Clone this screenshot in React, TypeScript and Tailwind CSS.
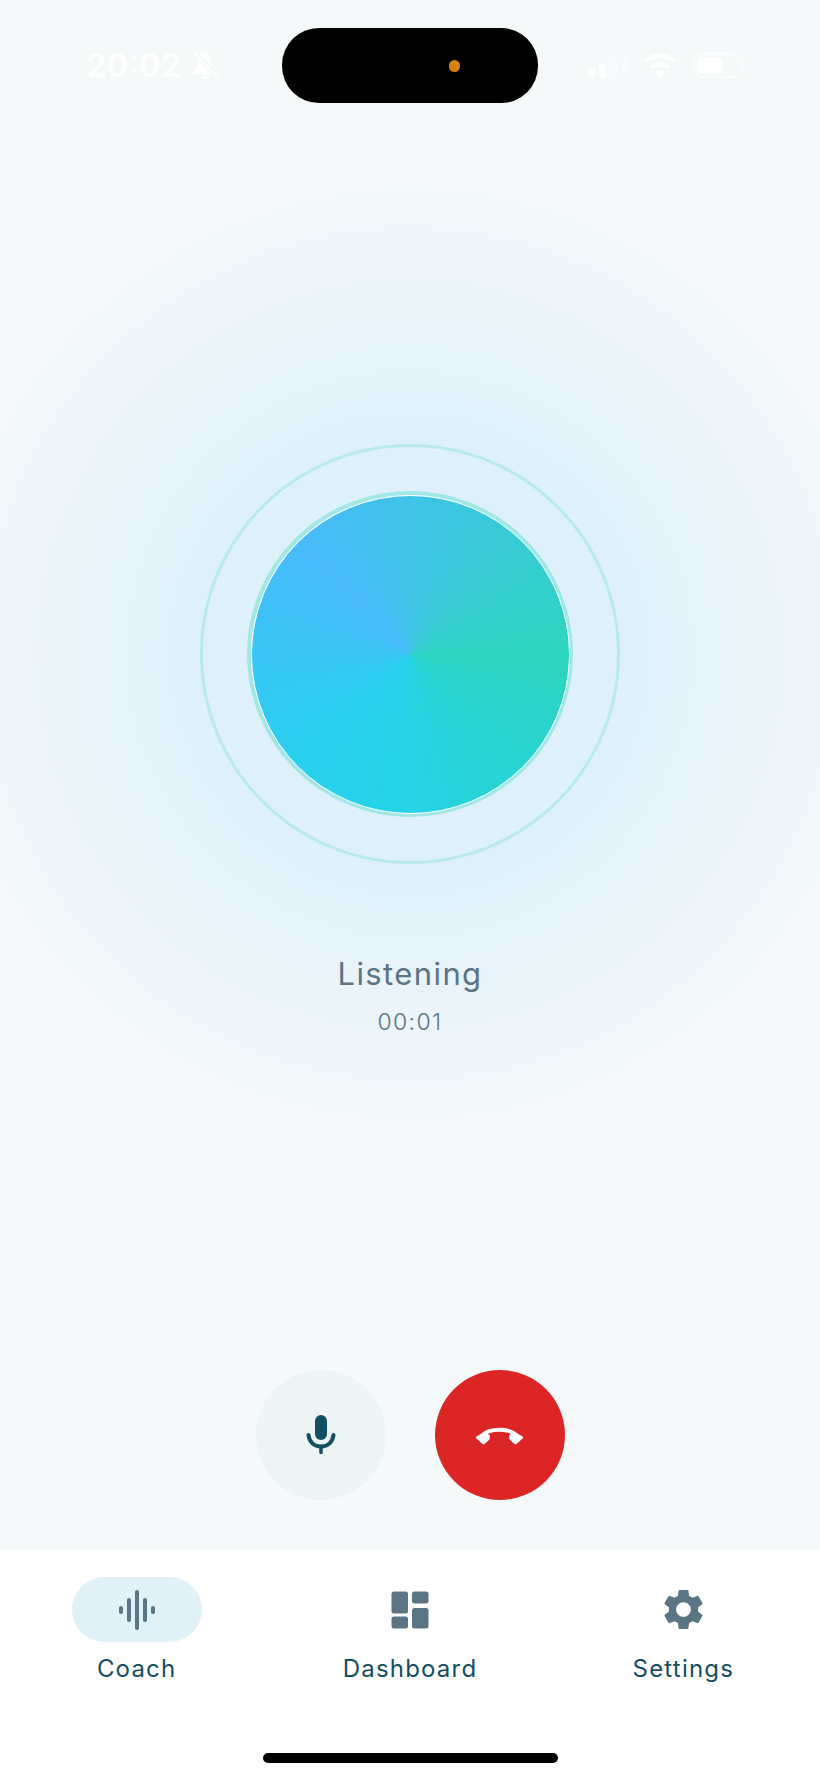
const slate = "#5b7585";
const ink = "#134e63";

function StatusLeft() {
  return (
    <div className="flex items-center gap-[10px] text-white">
      <span className="text-[33px] leading-none font-semibold">20:02</span>
      <svg width="28" height="29" viewBox="0 0 28 29" fill="none">
        <path
          d="M14 1c2.500 0 4.200 1.600 5 3.800 1.200 3.300.6 7.500 2.400 10.600L9 4.500C10 2.400 11.800 1 14 1zM6.800 9.500l13.400 14.300H3c-1.300 0-2-1.200-1.200-2.200 2.800-3.300 4.400-6.700 5-12.100zM10.500 25.200h7c-.4 1.900-1.800 3.300-3.500 3.300s-3.100-1.400-3.500-3.300z"
          fill="white"
        />
        <path d="M3 1.500 27 27" stroke="white" strokeWidth="2" strokeLinecap="round" />
      </svg>
    </div>
  );
}

function StatusRight() {
  return (
    <div className="flex items-center">
      <svg width="40" height="25" viewBox="0 0 40 25" fill="white">
        <rect x="0" y="15" width="7" height="10" rx="2.500" />
        <rect x="11" y="11" width="7" height="14" rx="2.500" />
        <rect x="22" y="5" width="7" height="20" rx="2.500" opacity="0.35" />
        <rect x="33" y="0" width="7" height="25" rx="2.500" opacity="0.35" />
      </svg>
      <svg className="ml-[15px]" width="34" height="25" viewBox="0 0 34 25" fill="none" stroke="white" strokeWidth="4.500">
        <path d="M2.500 8.500C10.500 1 23.500 1 31.500 8.500" />
        <path d="M8 14.500c5-4.500 13-4.500 18 0" />
        <path d="M17 24.500 11.500 18.800c3-2.500 8-2.500 11 0z" fill="white" stroke="none" />
      </svg>
      <div className="ml-[16px] flex items-center gap-[2px]">
        <div className="h-[25px] w-[50px] rounded-[9px] border-2 border-white/50 p-[2px]">
          <div className="h-full w-[26px] rounded-[6px] bg-white" />
        </div>
        <div className="h-[8px] w-[2px] rounded-r-full bg-white/50" />
      </div>
    </div>
  );
}

function Orb() {
  return (
    <div className="mt-[341px] grid h-[420px] w-[420px] place-items-center">
      <div className="col-start-1 row-start-1 h-[420px] w-[420px] rounded-full border-[3px] border-[#2dd4bf]/20" />
      <div className="col-start-1 row-start-1 h-[326px] w-[326px] rounded-full border-[4px] border-[#2dd4bf]/35" />
      <div className="col-start-1 row-start-1 h-[319px] w-[319px] rounded-full border border-white bg-[conic-gradient(from_90deg,#2dd4bf,#24d3e8_100deg,#2acff0_140deg,#48bafa_225deg,#2dd4bf)]" />
    </div>
  );
}

function MicIcon() {
  return (
    <svg width="30" height="40" viewBox="0 0 30 40" fill="none">
      <rect x="9" y="0" width="12" height="25" rx="6" fill={ink} />
      <path d="M2.500 20c1 7.500 6 11.500 12.500 11.500S26.500 27.500 27.500 20" stroke={ink} strokeWidth="4" strokeLinecap="round" />
      <path d="M15 32v5.500" stroke={ink} strokeWidth="3.500" strokeLinecap="round" />
    </svg>
  );
}

function HangUpIcon() {
  return (
    <svg width="49" height="19" viewBox="0 0 49 19" fill="white" stroke="white" strokeLinejoin="round">
      <path d="M7 9.500C15 1.800 34 1.800 42 9.500" fill="none" strokeWidth="4" />
      <path d="M2.500 11.500 9 8 13.500 10 13 13 8.500 17z" strokeWidth="3" />
      <path d="M46.500 11.500 40 8 35.500 10 36 13 40.500 17z" strokeWidth="3" />
    </svg>
  );
}

function CoachIcon() {
  return (
    <svg width="38" height="42" viewBox="0 0 38 42" fill={slate}>
      <rect x="1" y="17" width="4" height="8" rx="2" />
      <rect x="9" y="9" width="4" height="24" rx="2" />
      <rect x="17" y="1" width="4" height="40" rx="2" />
      <rect x="25" y="9" width="4" height="24" rx="2" />
      <rect x="33" y="17" width="4" height="8" rx="2" />
    </svg>
  );
}

function DashboardIcon() {
  return (
    <svg width="38" height="38" viewBox="0 0 38 38" fill={slate}>
      <rect x="0.500" y="0.500" width="16.500" height="22" rx="2.500" />
      <rect x="21" y="0.500" width="16.500" height="12" rx="2.500" />
      <rect x="21" y="17" width="16.500" height="20.500" rx="2.500" />
      <rect x="0.500" y="25.500" width="16.500" height="12" rx="2.500" />
    </svg>
  );
}

function GearIcon() {
  return (
    <svg width="49" height="49" viewBox="0 0 24 24" fill={slate}>
      <path d="M19.140 12.940c.04-.3.06-.61.06-.94 0-.32-.02-.64-.07-.94l2.030-1.580c.18-.14.23-.41.12-.61l-1.920-3.320c-.12-.22-.37-.29-.59-.22l-2.390.96c-.5-.38-1.030-.7-1.620-.94l-.36-2.540c-.04-.24-.24-.41-.48-.41h-3.840c-.24 0-.43.17-.47.41l-.36 2.540c-.59.24-1.130.57-1.620.94l-2.390-.96c-.22-.08-.47 0-.59.22L2.740 8.870c-.12.21-.08.47.12.61l2.030 1.580c-.05.3-.09.63-.09.94s.02.64.07.94l-2.030 1.580c-.18.14-.23.41-.12.61l1.920 3.320c.12.22.37.29.59.22l2.390-.96c.5.38 1.030.7 1.620.94l.36 2.540c.05.24.24.41.48.41h3.840c.24 0 .44-.17.47-.41l.36-2.540c.59-.24 1.130-.56 1.620-.94l2.390.96c.22.08.47 0 .59-.22l1.920-3.320c.12-.22.07-.47-.12-.61l-2.010-1.580zM12 15.600c-1.980 0-3.600-1.620-3.600-3.600s1.620-3.600 3.600-3.600 3.600 1.620 3.600 3.600-1.620 3.600-3.600 3.600z" />
    </svg>
  );
}

function TabItem({ label, active, children }: { label: string; active?: boolean; children: React.ReactNode }) {
  return (
    <div className="flex flex-col items-center">
      <div className={"grid h-[65px] w-[130px] place-items-center rounded-full " + (active ? "bg-[#e0f2f7]" : "")}>
        {children}
      </div>
      <span className="mt-[12px] text-[24px] leading-[30px] font-normal tracking-[1.2px] text-[#134e63]">{label}</span>
    </div>
  );
}

export default function App() {
  return (
    <div className="flex h-[1782px] w-[820px] flex-col overflow-hidden bg-white font-['Inter',sans-serif]">
      <main className="flex h-[1549px] flex-col items-center bg-[#f5f9fa] bg-[radial-gradient(circle_at_410px_654px,#def1fa_0px,#def1fa_215px,#e9f4fa_330px,#f5f9fa_490px)]">
        <div className="mt-[28px] flex h-[75px] w-full items-center">
          <div className="w-[282px] pl-[86px]">
            <StatusLeft />
          </div>
          <div className="flex h-[75px] w-[256px] items-center justify-end rounded-[37px] bg-black pr-[78px]">
            <div className="h-[12px] w-[11px] rounded-full bg-[#d9810f]" />
          </div>
          <div className="pl-[50px]">
            <StatusRight />
          </div>
        </div>

        <Orb />

        <p className="mt-[91px] text-[31px] leading-[38px] font-normal tracking-[1.4px] text-[#5b7585]">Listening</p>
        <p className="mt-[15px] text-[23px] leading-[28px] font-light tracking-[1.4px] text-[#5b7585]">00:01</p>

        <div className="mt-[334px] flex items-center gap-[49px]">
          <button className="grid h-[130px] w-[130px] place-items-center rounded-full bg-[#edf4f6]">
            <MicIcon />
          </button>
          <button className="grid h-[130px] w-[130px] place-items-center rounded-full bg-[#dc2626]">
            <HangUpIcon />
          </button>
        </div>
      </main>

      <nav className="flex flex-1 flex-col">
        <div className="grid grid-cols-3 pt-[28px]">
          <TabItem label="Coach" active>
            <CoachIcon />
          </TabItem>
          <TabItem label="Dashboard">
            <DashboardIcon />
          </TabItem>
          <TabItem label="Settings">
            <GearIcon />
          </TabItem>
        </div>
        <div className="mx-auto mt-[69px] h-[10px] w-[295px] rounded-full bg-black" />
      </nav>
    </div>
  );
}
